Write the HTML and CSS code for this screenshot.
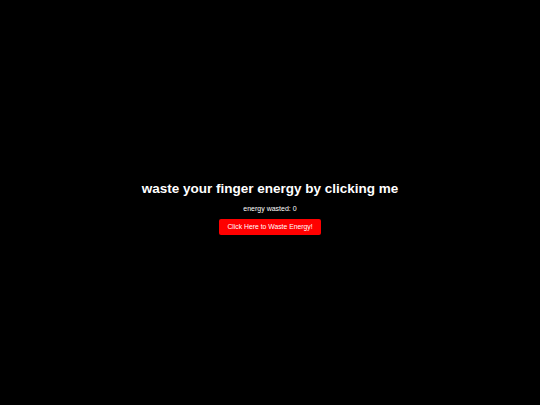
FILE: index.html
```
<!DOCTYPE html>
<html>
<head>
<meta charset="utf-8">
<link rel="stylesheet" href="styles.css">
</head>
<body>
<main class="page">
  <h1 class="title">waste your finger energy by clicking me</h1>
  <p class="counter">energy wasted: <span>0</span></p>
  <button class="waste-btn">Click Here to Waste Energy!</button>
</main>
</body>
</html>
```
FILE: styles.css
```
html, body {
  margin: 0;
  padding: 0;
  background: #000;
  height: 100%;
}
.page {
  box-sizing: border-box;
  height: 100%;
  padding-top: 10px;
  display: flex;
  flex-direction: column;
  align-items: center;
  justify-content: center;
  font-family: "Liberation Sans", Arial, sans-serif;
  color: #fff;
}
.title {
  margin: 0;
  font-size: 13.5px;
  line-height: 16px;
  font-weight: bold;
}
.counter {
  margin: 8px 0 6px;
  font-size: 7px;
  line-height: 8px;
}
.waste-btn {
  font-family: "Liberation Sans", Arial, sans-serif;
  background: #f00;
  color: #fff;
  border: none;
  border-radius: 2px;
  font-size: 6.8px;
  line-height: 8px;
  padding: 4px 8px;
  cursor: pointer;
}
```
